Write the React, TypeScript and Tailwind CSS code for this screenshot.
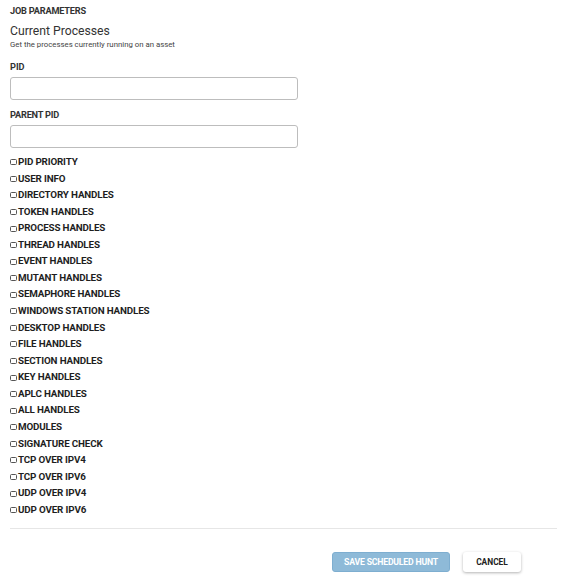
import React from "react";

const items = [
  "PID PRIORITY",
  "USER INFO",
  "DIRECTORY HANDLES",
  "TOKEN HANDLES",
  "PROCESS HANDLES",
  "THREAD HANDLES",
  "EVENT HANDLES",
  "MUTANT HANDLES",
  "SEMAPHORE HANDLES",
  "WINDOWS STATION HANDLES",
  "DESKTOP HANDLES",
  "FILE HANDLES",
  "SECTION HANDLES",
  "KEY HANDLES",
  "APLC HANDLES",
  "ALL HANDLES",
  "MODULES",
  "SIGNATURE CHECK",
  "TCP OVER IPV4",
  "TCP OVER IPV6",
  "UDP OVER IPV4",
  "UDP OVER IPV6",
];

export default function App() {
  return (
    <div className="w-[575px] h-[585px] bg-white font-['Roboto',sans-serif] text-[#222] overflow-hidden">
      <div className="pl-[10px] w-[557px] flex flex-col">
        <div className="mt-[6px] text-[9.2px] leading-[10px] font-bold text-[#333] tracking-[-0.2px]">JOB PARAMETERS</div>
        <div className="mt-[8px] text-[12.2px] leading-[14px] text-[#333]">Current Processes</div>
        <div className="mt-[2px] text-[7.8px] leading-[10px] text-[#444]">Get the processes currently running on an asset</div>
        <div className="mt-[12px] text-[9.2px] leading-[10px] font-bold text-[#333]">PID</div>
        <input className="mt-[5px] w-[288px] h-[23px] border border-[#bdbdbd] rounded-[3px] bg-white outline-none" />
        <div className="mt-[10px] text-[9.2px] leading-[10px] font-bold text-[#333] tracking-[-0.2px]">PARENT PID</div>
        <input className="mt-[5px] w-[288px] h-[23px] border border-[#bdbdbd] rounded-[3px] bg-white outline-none" />
        <div className="mt-[6px] flex flex-col">
          {items.map((it) => (
            <label key={it} className="h-[16.57px] flex items-center gap-[1px] text-[9.8px] font-bold tracking-[-0.15px] text-[#1e1e1e]">
              <span className="w-[7px] h-[6px] border border-[#555] rounded-[1.5px] bg-white shrink-0" />
              <span>{it}</span>
            </label>
          ))}
        </div>
        <div className="mt-[10px] h-px bg-[#e6e6e6]" />
        <div className="mt-[23px] flex justify-end pr-[36px] gap-[13px]">
          <button className="w-[118px] h-[20px] rounded-[3px] bg-[#8ebad8] border border-[#7eaed0] text-white text-[8.7px] font-bold tracking-[-0.2px]">
            SAVE SCHEDULED HUNT
          </button>
          <button className="w-[58px] h-[20px] rounded-[3px] bg-white shadow-[0_1px_3px_rgba(0,0,0,0.3)] text-[#222] text-[8.4px] font-bold">
            CANCEL
          </button>
        </div>
      </div>
    </div>
  );
}
